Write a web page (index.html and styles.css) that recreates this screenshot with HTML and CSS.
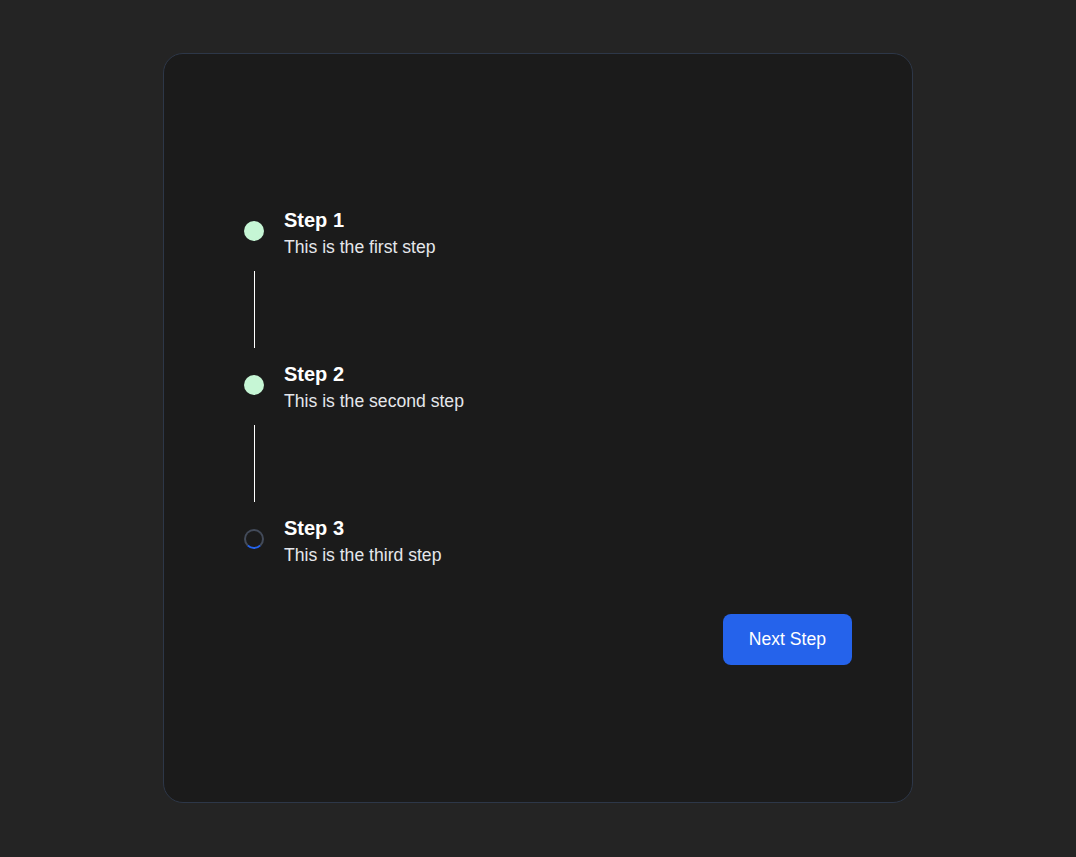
FILE: index.html
```html
<!DOCTYPE html>
<html lang="en">
<head>
<meta charset="utf-8">
<title>Stepper</title>
<link rel="stylesheet" href="styles.css">
</head>
<body>
  <div class="card">
    <div class="stepper">
      <div class="step">
        <span class="dot done"></span>
        <div class="text">
          <div class="title">Step 1</div>
          <div class="desc">This is the first step</div>
        </div>
      </div>
      <div class="connector"></div>
      <div class="step">
        <span class="dot done"></span>
        <div class="text">
          <div class="title">Step 2</div>
          <div class="desc">This is the second step</div>
        </div>
      </div>
      <div class="connector"></div>
      <div class="step">
        <span class="dot pending"></span>
        <div class="text">
          <div class="title">Step 3</div>
          <div class="desc">This is the third step</div>
        </div>
      </div>
    </div>
    <div class="actions">
      <button class="next">Next Step</button>
    </div>
  </div>
</body>
</html>
```

FILE: styles.css
```css
html, body {
  margin: 0;
  padding: 0;
}
body {
  background: #242424;
  min-height: 100vh;
  display: flex;
  align-items: center;
  justify-content: center;
  font-family: "Liberation Sans", Arial, sans-serif;
}
.card {
  box-sizing: border-box;
  width: 750px;
  height: 750px;
  background: #1b1b1b;
  border: 1px solid #2d3748;
  border-radius: 20px;
  padding: 154px 60px 0 80px;
  margin-top: -1px;
}
.stepper {
  display: flex;
  flex-direction: column;
}
.step {
  display: flex;
  align-items: flex-start;
  gap: 20px;
}
.dot {
  box-sizing: border-box;
  width: 20px;
  height: 20px;
  border-radius: 50%;
  margin-top: 13px;
  flex-shrink: 0;
}
.dot.done {
  background: #c6f6d5;
}
.dot.pending {
  border: 2px solid #434b5a;
  border-bottom-color: #2563eb;
}
.text {
  display: flex;
  flex-direction: column;
}
.title {
  color: #ffffff;
  font-weight: 700;
  font-size: 20px;
  line-height: 24px;
  margin-bottom: 4px;
}
.desc {
  color: #e5e7eb;
  font-size: 17.6px;
  line-height: 22px;
}
.connector {
  width: 1px;
  height: 77px;
  background: #ffffff;
  margin: 13px 0 14px 10px;
}
.actions {
  display: flex;
  justify-content: flex-end;
  margin-top: 48px;
}
.next {
  height: 51px;
  padding: 0 26px;
  background: #2563eb;
  color: #ffffff;
  border: none;
  border-radius: 8px;
  font-family: "Liberation Sans", Arial, sans-serif;
  font-size: 17.6px;
  cursor: pointer;
}
```
